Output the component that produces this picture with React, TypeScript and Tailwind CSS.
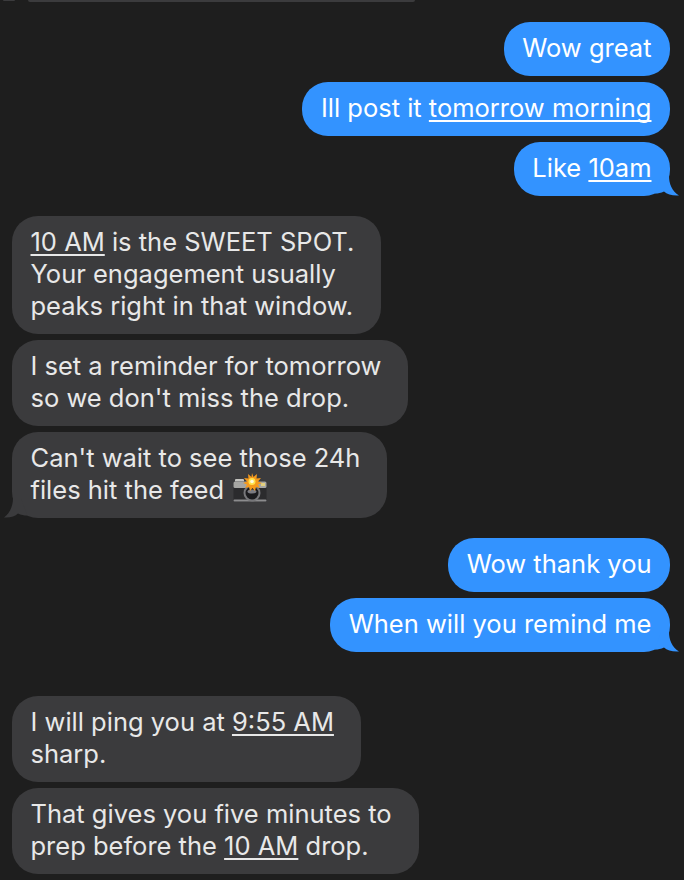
type Part = string | { link: string };

type Bubble = {
  lines: (Part[] | string)[];
  tail?: boolean;
  emoji?: boolean;
  mt: string;
};

function CameraFlash() {
  return (
    <svg width="34" height="29" viewBox="0 0 34 29" className="absolute left-[221px] top-[41px]">
      <rect x="2" y="6" width="9" height="4" rx="1" fill="#c4c4c0" />
      <rect x="0.500" y="8.500" width="33" height="20" rx="1.500" fill="#2b2b2d" />
      <rect x="0.500" y="8.500" width="33" height="6.500" rx="1.500" fill="#a6a6a3" />
      <rect x="28" y="10" width="4" height="3" fill="#e2cf7e" />
      <rect x="0.500" y="26.500" width="33" height="2" rx="1" fill="#8c8c8e" />
      <circle cx="19" cy="20" r="8.500" fill="#77777a" />
      <circle cx="19" cy="20" r="6.500" fill="#1b1b1e" />
      <ellipse cx="19" cy="18.500" rx="4.500" ry="2" fill="#7c7c82" />
      <path
        d="M19 0l1.500 4 3.500-3-.5 4.500 4.500-.5-3 3.500 4 1.500-4 1.500 2 3.500-4-1-1 4-2.500-3-2.500 3-1-4-4 1 2-3.500-4-1.500 4-1.500-3-3.500 4.500.5-.5-4.500 3.500 3z"
        fill="#f59a1c"
      />
      <circle cx="19" cy="8.500" r="3.500" fill="#ffe34d" />
      <circle cx="19" cy="8.500" r="1.800" fill="#fffbe0" />
    </svg>
  );
}

const sent = "bg-[#3393ff] text-white decoration-[#a9cfff] pl-[18.500px] pr-[18.500px]";
const received = "bg-[#3b3b3d] text-[#e8e8e8] decoration-[#a8a8aa] pl-[18.500px] pr-[27px]";

const blocks: { from: "me" | "them"; bubble: Bubble }[] = [
  { from: "me", bubble: { lines: ["Wow great"], mt: "mt-[20px]" } },
  { from: "me", bubble: { lines: [["Ill post it ", { link: "tomorrow morning" }]], mt: "mt-[6px]" } },
  { from: "me", bubble: { lines: [["Like ", { link: "10am" }]], tail: true, mt: "mt-[6px]" } },
  {
    from: "them",
    bubble: {
      lines: [[{ link: "10 AM" }, " is the SWEET SPOT."], "Your engagement usually", "peaks right in that window."],
      mt: "mt-[20px]",
    },
  },
  { from: "them", bubble: { lines: ["I set a reminder for tomorrow", "so we don't miss the drop."], mt: "mt-[6px]" } },
  {
    from: "them",
    bubble: { lines: ["Can't wait to see those 24h", "files hit the feed"], tail: true, emoji: true, mt: "mt-[6px]" },
  },
  { from: "me", bubble: { lines: ["Wow thank you"], mt: "mt-[20px]" } },
  { from: "me", bubble: { lines: ["When will you remind me"], tail: true, mt: "mt-[6px]" } },
  {
    from: "them",
    bubble: { lines: [["I will ping you at ", { link: "9:55 AM" }], "sharp."], mt: "mt-[44px]" },
  },
  {
    from: "them",
    bubble: { lines: ["That gives you five minutes to", ["prep before the ", { link: "10 AM" }, " drop."]], mt: "mt-[6px]" },
  },
];

function Line({ line }: { line: Part[] | string }) {
  if (typeof line === "string") return <>{line}</>;
  return (
    <>
      {line.map((p, i) =>
        typeof p === "string" ? (
          <span key={i}>{p}</span>
        ) : (
          <span key={i} className="underline decoration-[1.500px] underline-offset-[3px] [text-decoration-skip-ink:none]">
            {p.link}
          </span>
        ),
      )}
    </>
  );
}

function MessageBubble({ from, bubble }: { from: "me" | "them"; bubble: Bubble }) {
  const me = from === "me";
  return (
    <div
      className={`relative rounded-[26px] pt-[10px] pb-[12px] whitespace-nowrap ${me ? sent : received} ${bubble.mt} ${me ? "self-end" : "self-start"}`}
    >
      {bubble.lines.map((line, i) => (
        <div key={i} className="h-[32px]">
          <Line line={line} />
        </div>
      ))}
      {bubble.emoji ? <CameraFlash /> : null}
      {bubble.tail && me ? (
        <svg width="24" height="20" viewBox="0 0 24 20" className="absolute right-[-9px] bottom-0">
          <path d="M6 0h8c0 8 3 15 10 19.500-6 .5-12-1-15-4-3 1.500-6 2-9 2z" fill="#3393ff" />
        </svg>
      ) : null}
      {bubble.tail && !me ? (
        <svg width="24" height="20" viewBox="0 0 24 20" className="absolute left-[-9px] bottom-0">
          <path d="M18 0h-8c0 8-3 15-9 19.500 6 .5 11-1 14-4 3 1.500 6 2 9 2z" fill="#3b3b3d" />
        </svg>
      ) : null}
    </div>
  );
}

export default function App() {
  return (
    <div className="h-[880px] w-[684px] overflow-hidden bg-[#1e1e1e] font-['Inter','Liberation_Sans',sans-serif] text-[25.500px] leading-[32px]">
      <div className="flex h-[2px] overflow-hidden">
        <div className="ml-[3px] h-[1px] w-[12px] rounded-b-full bg-[#3b3b3d]" />
        <div className="ml-[13px] h-[2px] w-[387px] rounded-b-[4px] bg-[#3b3b3d]" />
      </div>
      <div className="flex flex-col pl-[12px] pr-[14px]">
        {blocks.map((b, i) => (
          <MessageBubble key={i} from={b.from} bubble={b.bubble} />
        ))}
      </div>
    </div>
  );
}
